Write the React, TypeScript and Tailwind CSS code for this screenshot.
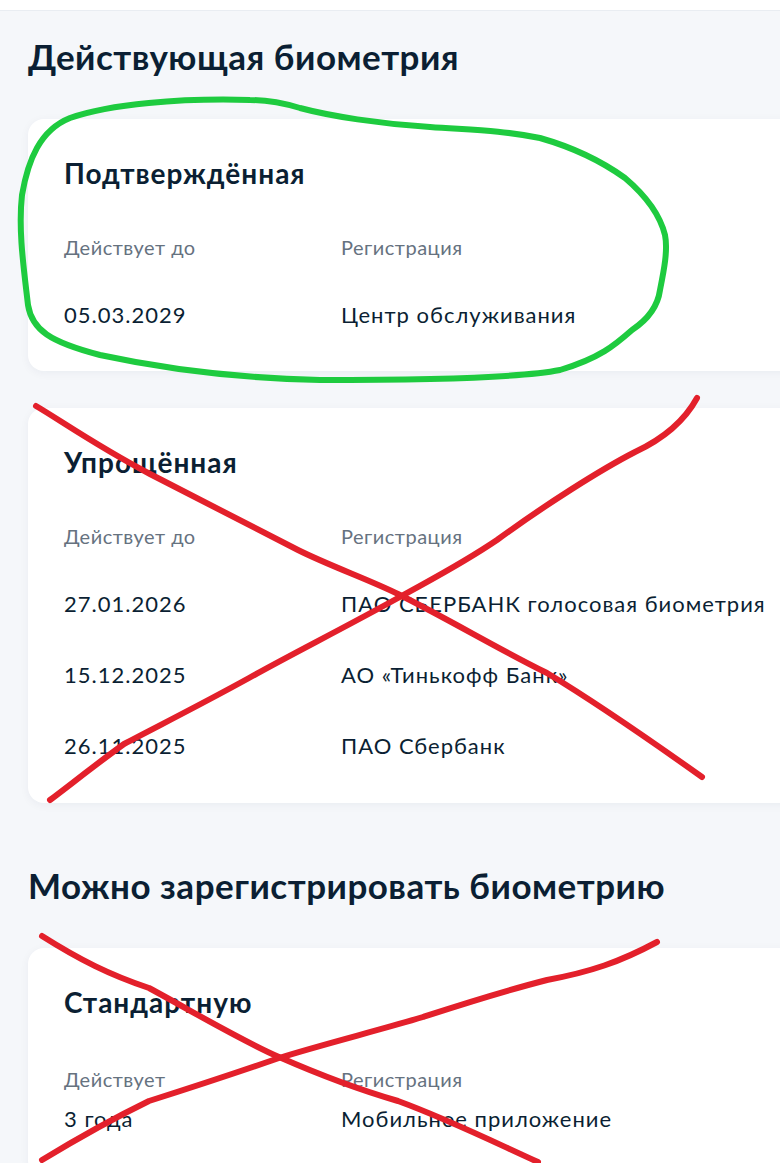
import React from 'react';

type Row = { date: string; source: string };

const font = { fontFamily: 'Lato, "Noto Sans", sans-serif' };

function InfoCard({ title, rows, label = 'Действует до' }: { title: string; rows: Row[]; label?: string }) {
  return (
    <div className="w-[800px] rounded-2xl bg-white pl-[36px] pt-[38px] pb-[43px] shadow-[0_2px_10px_rgba(16,40,70,0.05)]">
      <h3 className="text-[28px] leading-[1.2] font-bold tracking-[1px] text-[#0b1f33]">{title}</h3>
      <div className="mt-[44px] flex text-[20px] leading-[1.2] tracking-[0.5px] text-[#66727f]">
        <div className="w-[277px]">{label}</div>
        <div>Регистрация</div>
      </div>
      {rows.map((r, i) => (
        <div
          key={r.date + r.source}
          className={`flex text-[22px] leading-[1.2] tracking-[1px] text-[#0b1f33] ${i === 0 ? 'mt-[43px]' : 'mt-[45px]'}`}
        >
          <div className="w-[277px]">{r.date}</div>
          <div>{r.source}</div>
        </div>
      ))}
    </div>
  );
}

// hand-drawn marks over the screenshot
function Scribbles() {
  return (
    <svg className="pointer-events-none absolute inset-0" width="780" height="1163" viewBox="0 0 780 1163" fill="none">
      <path
        d="M250 100 C 180 98, 110 104, 70 118 C 40 130, 28 160, 22 195 C 18 230, 24 270, 28 305 C 32 330, 50 342, 100 355 C 160 368, 230 378, 320 380 C 420 380, 520 378, 560 370 C 600 358, 615 345, 632 330 C 650 318, 658 305, 660 290 C 664 270, 668 250, 665 235 C 660 215, 645 195, 625 178 C 600 160, 575 148, 540 138 C 500 130, 470 130, 430 127 C 380 124, 330 116, 300 108 C 280 102, 265 100, 250 100 Z"
        stroke="#1ecb3f"
        strokeWidth="6"
        strokeLinecap="round"
        strokeLinejoin="round"
      />
      <g stroke="#e3202b" strokeWidth="6" strokeLinecap="round" strokeLinejoin="round">
        <path d="M36 406 C 60 420, 95 445, 150 474 C 200 500, 250 525, 298 550 C 330 566, 370 580, 398 594 C 450 620, 500 650, 547 673 C 600 705, 650 740, 702 777" />
        <path d="M697 398 C 685 420, 665 438, 635 452 C 600 470, 545 505, 497 540 C 460 565, 430 580, 398 598 C 340 630, 290 655, 249 678 C 200 705, 160 725, 124 744 C 95 765, 70 785, 50 800" />
        <path d="M42 936 C 80 960, 110 975, 149 988 C 190 1010, 240 1040, 279 1057 C 320 1075, 360 1090, 398 1101 C 450 1120, 500 1145, 538 1162" />
        <path d="M657 942 C 620 962, 590 972, 547 980 C 500 992, 460 1005, 423 1017 C 380 1030, 320 1045, 279 1058 C 230 1075, 190 1088, 149 1101 C 110 1120, 75 1140, 42 1160" />
      </g>
    </svg>
  );
}

export default function App() {
  return (
    <div className="relative h-[1163px] w-[780px] overflow-hidden bg-[#f5f7fa]" style={font}>
      <div className="h-[11px] border-b border-[#e9edf2] bg-white" />

      <div className="pl-[28px]">
        <h2 className="mt-[24px] text-[35px] leading-[1.2] font-bold tracking-[0.5px] text-[#0b1f33]">Действующая биометрия</h2>

        <div className="mt-[42px]">
          <InfoCard title="Подтверждённая" rows={[{ date: '05.03.2029', source: 'Центр обслуживания' }]} />
        </div>

        <div className="mt-[37px]">
          <InfoCard
            title="Упрощённая"
            rows={[
              { date: '27.01.2026', source: 'ПАО СБЕРБАНК голосовая биометрия' },
              { date: '15.12.2025', source: 'АО «Тинькофф Банк»' },
              { date: '26.11.2025', source: 'ПАО Сбербанк' },
            ]}
          />
        </div>

        <h2 className="mt-[61px] text-[35px] leading-[1.2] font-bold tracking-[0.5px] text-[#0b1f33]">Можно зарегистрировать биометрию</h2>

        <div className="mt-[42px] w-[800px] rounded-2xl bg-white pl-[36px] pt-[38px] pb-[43px] shadow-[0_2px_10px_rgba(16,40,70,0.05)]">
          <h3 className="text-[28px] leading-[1.2] font-bold tracking-[1px] text-[#0b1f33]">Стандартную</h3>
          <div className="mt-[48px] flex text-[20px] leading-[1.2] tracking-[0.5px] text-[#66727f]">
            <div className="w-[277px]">Действует</div>
            <div>Регистрация</div>
          </div>
          <div className="mt-[15px] flex text-[22px] leading-[1.2] tracking-[1px] text-[#0b1f33]">
            <div className="w-[277px]">3 года</div>
            <div>Мобильное приложение</div>
          </div>
        </div>
      </div>

      <Scribbles />
    </div>
  );
}
